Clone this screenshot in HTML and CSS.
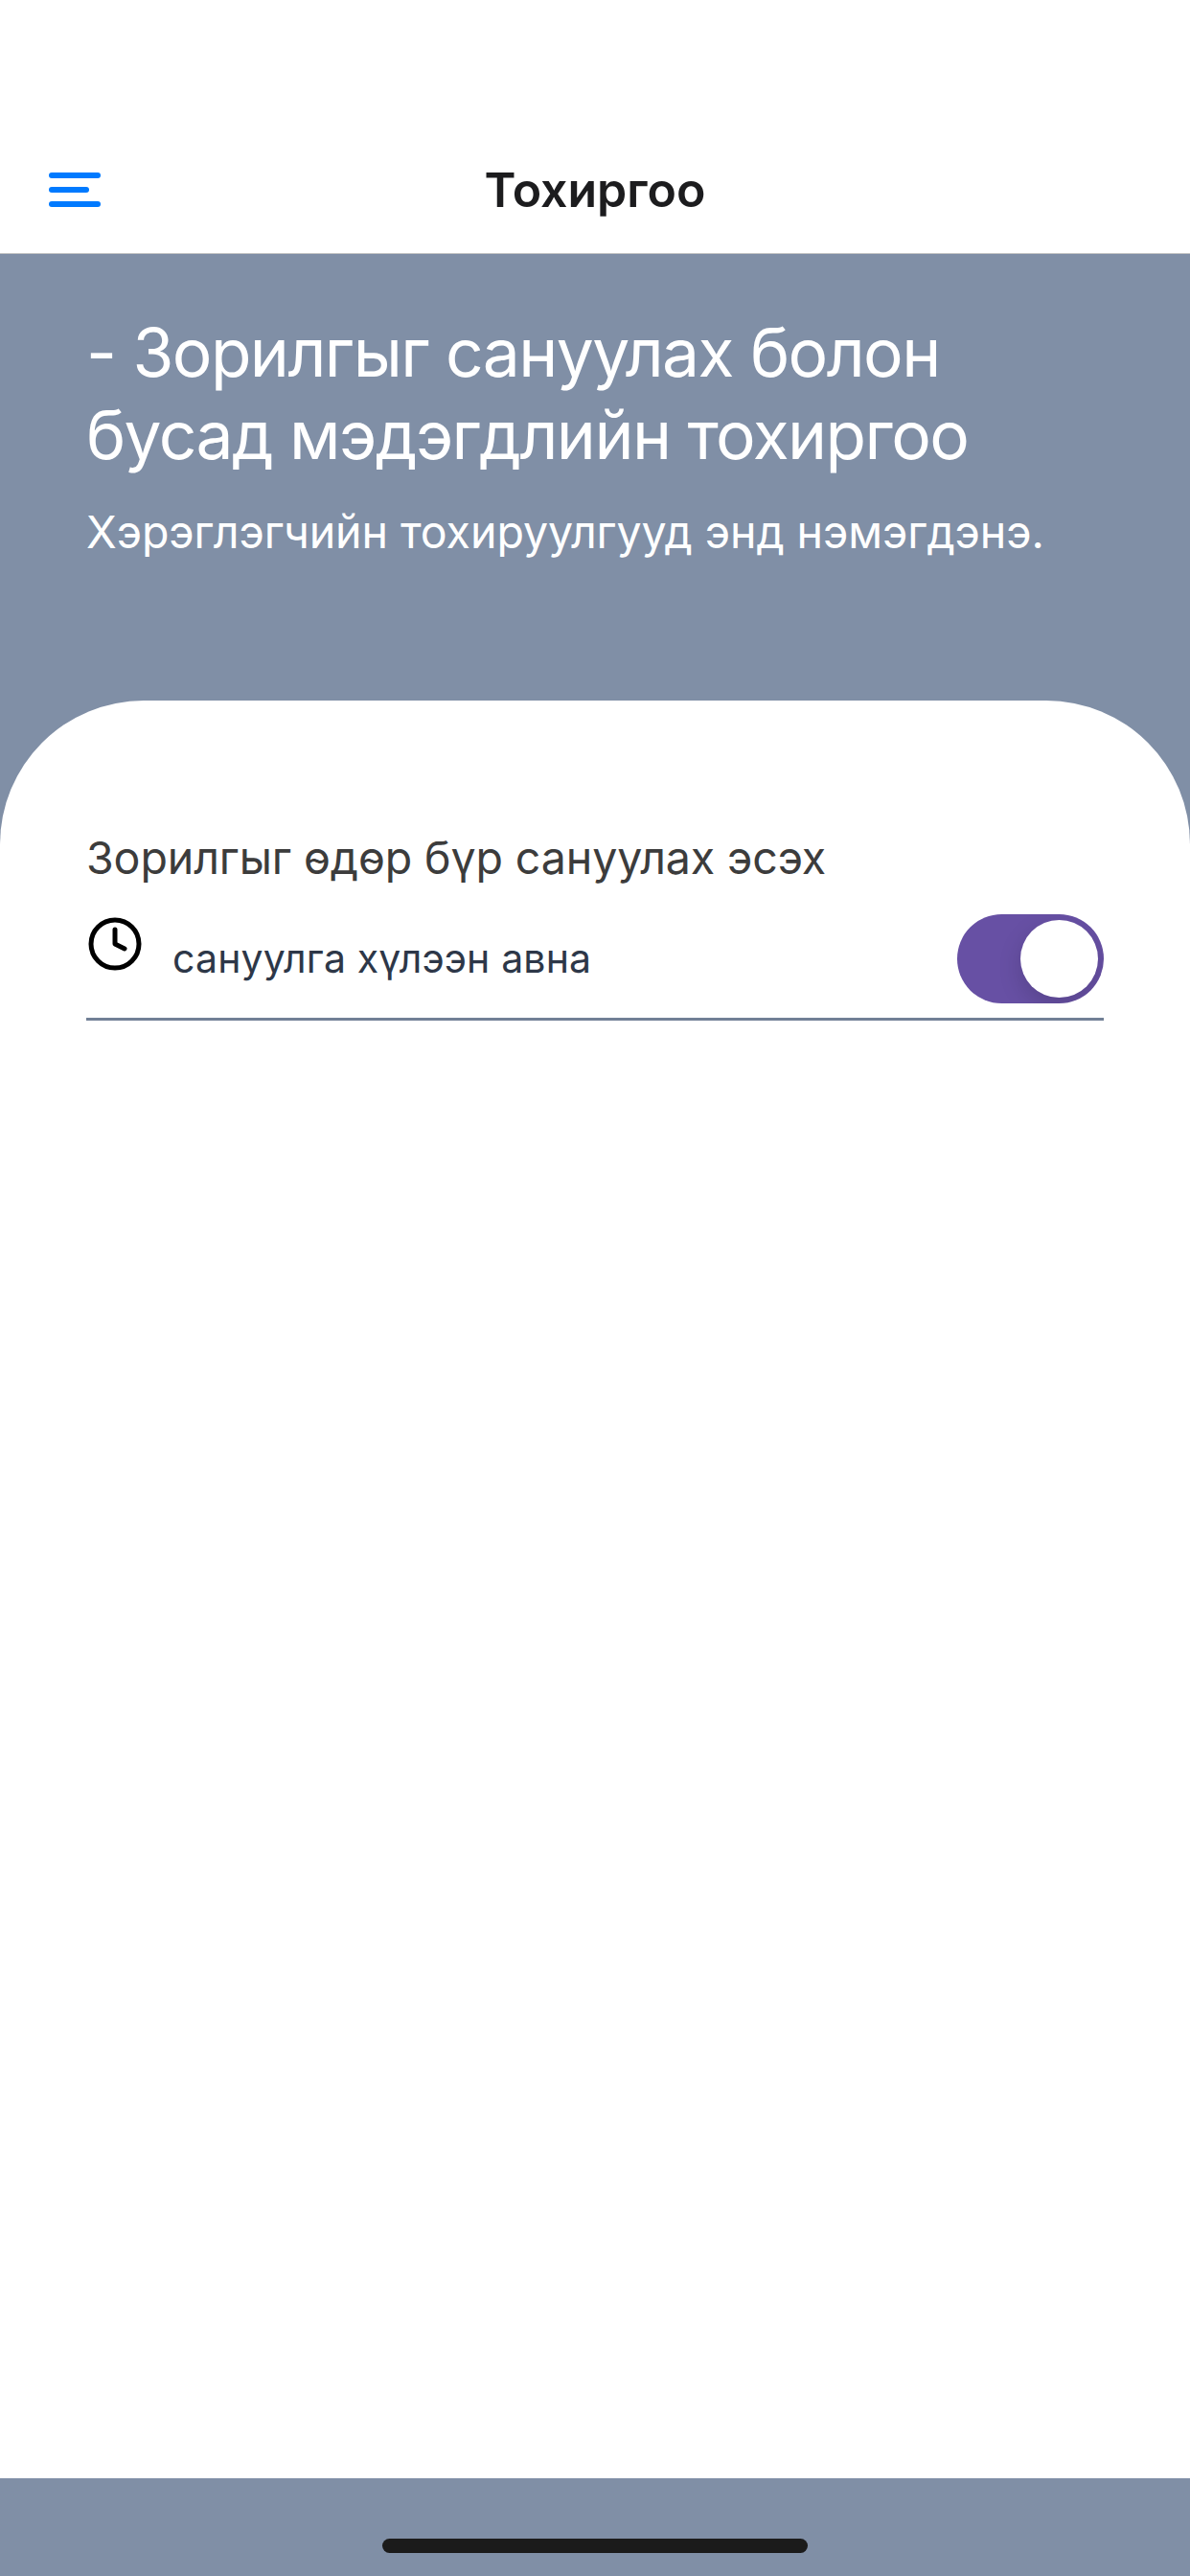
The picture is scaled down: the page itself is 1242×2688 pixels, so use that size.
FILE: index.html
```html
<!DOCTYPE html>
<html lang="mn">
<head>
<meta charset="utf-8">
<title>Тохиргоо</title>
<link rel="stylesheet" href="styles.css">
</head>
<body>
<div class="screen">
  <header class="navbar">
    <button class="menu" aria-label="Цэс"><span class="bar"></span><span class="bar bar-short"></span><span class="bar"></span></button>
    <h1 class="navbar-title">Тохиргоо</h1>
  </header>
  <section class="intro">
    <h2 class="intro-title">- Зорилгыг сануулах болон<br>бусад мэдэгдлийн тохиргоо</h2>
    <p class="intro-text">Хэрэглэгчийн тохируулгууд энд нэмэгдэнэ.</p>
  </section>
  <main class="card">
    <h3 class="setting-title">Зорилгыг өдөр бүр сануулах эсэх</h3>
    <div class="setting">
      <svg class="clock" viewBox="0 0 24 24" fill="none" stroke="currentColor" stroke-width="2" stroke-linecap="round" stroke-linejoin="round"><circle cx="12" cy="12" r="10"/><polyline points="12 6 12 12 16 14"/></svg>
      <span class="setting-label">сануулга хүлээн авна</span>
      <button class="switch" role="switch" aria-checked="true" aria-label="сануулга"><span class="knob"></span></button>
    </div>
  </main>
  <footer class="home-area"><span class="home-indicator"></span></footer>
</div>
</body>
</html>
```
FILE: styles.css
```css
* { box-sizing: border-box; }
body {
  margin: 0;
  font-family: Inter, "Noto Sans", sans-serif;
}
h1, h2, h3, p { margin: 0; font-weight: 400; }
button { margin: 0; padding: 0; border: 0; background: none; }
.screen {
  display: flex;
  flex-direction: column;
  width: 1242px;
  height: 2688px;
  overflow: hidden;
  background: #808fa6;
}
.navbar {
  display: grid;
  grid-template-columns: 1fr auto 1fr;
  align-items: center;
  height: 265px;
  padding: 132px 51px 0;
  background: #fff;
  border-bottom: 1px solid #c6c6c6;
}
.menu {
  display: flex;
  flex-direction: column;
  gap: 9px;
  width: 54px;
}
.bar {
  width: 54px;
  height: 6px;
  border-radius: 3px;
  background: #007aff;
}
.bar-short { width: 42px; }
.navbar-title {
  font-size: 50px;
  font-weight: 600;
  line-height: 60px;
  color: #1c1c1e;
}
.intro {
  height: 466px;
  padding: 60px 90px 0;
  color: #fff;
}
.intro-title {
  font-size: 69.5px;
  line-height: 86px;
  letter-spacing: -1.56px;
  white-space: nowrap;
}
.intro-text {
  margin-top: 28px;
  font-size: 46.5px;
  line-height: 60px;
  letter-spacing: -0.06px;
  white-space: nowrap;
}
.card {
  flex: 1;
  padding: 134px 90px 0;
  background: #fff;
  border-radius: 150px 150px 0 0;
}
.setting-title {
  font-size: 46.5px;
  line-height: 60px;
  letter-spacing: -0.1px;
  color: #3c3c3c;
}
.setting {
  display: flex;
  align-items: flex-start;
  margin-top: 29px;
  padding-bottom: 15px;
  border-bottom: 3px solid #718096;
}
.clock {
  width: 60px;
  height: 60px;
  margin-top: 0.5px;
  color: #000;
}
.setting-label {
  flex: 1;
  margin-left: 30px;
  font-size: 41px;
  line-height: 93px;
  letter-spacing: 0.16px;
  color: #2d3748;
}
.switch {
  display: flex;
  justify-content: flex-end;
  width: 153px;
  height: 93px;
  padding: 6px;
  border-radius: 46.5px;
  background: #6750a4;
  overflow: hidden;
}
.knob {
  width: 81px;
  height: 81px;
  border-radius: 50%;
  background: #fff;
  box-shadow: 0 9px 24px rgba(0, 0, 0, 0.15);
}
.home-area {
  display: flex;
  justify-content: center;
  height: 102px;
  padding-top: 63px;
}
.home-indicator {
  width: 444px;
  height: 15px;
  border-radius: 7.5px;
  background: #1b1b1b;
}
```
